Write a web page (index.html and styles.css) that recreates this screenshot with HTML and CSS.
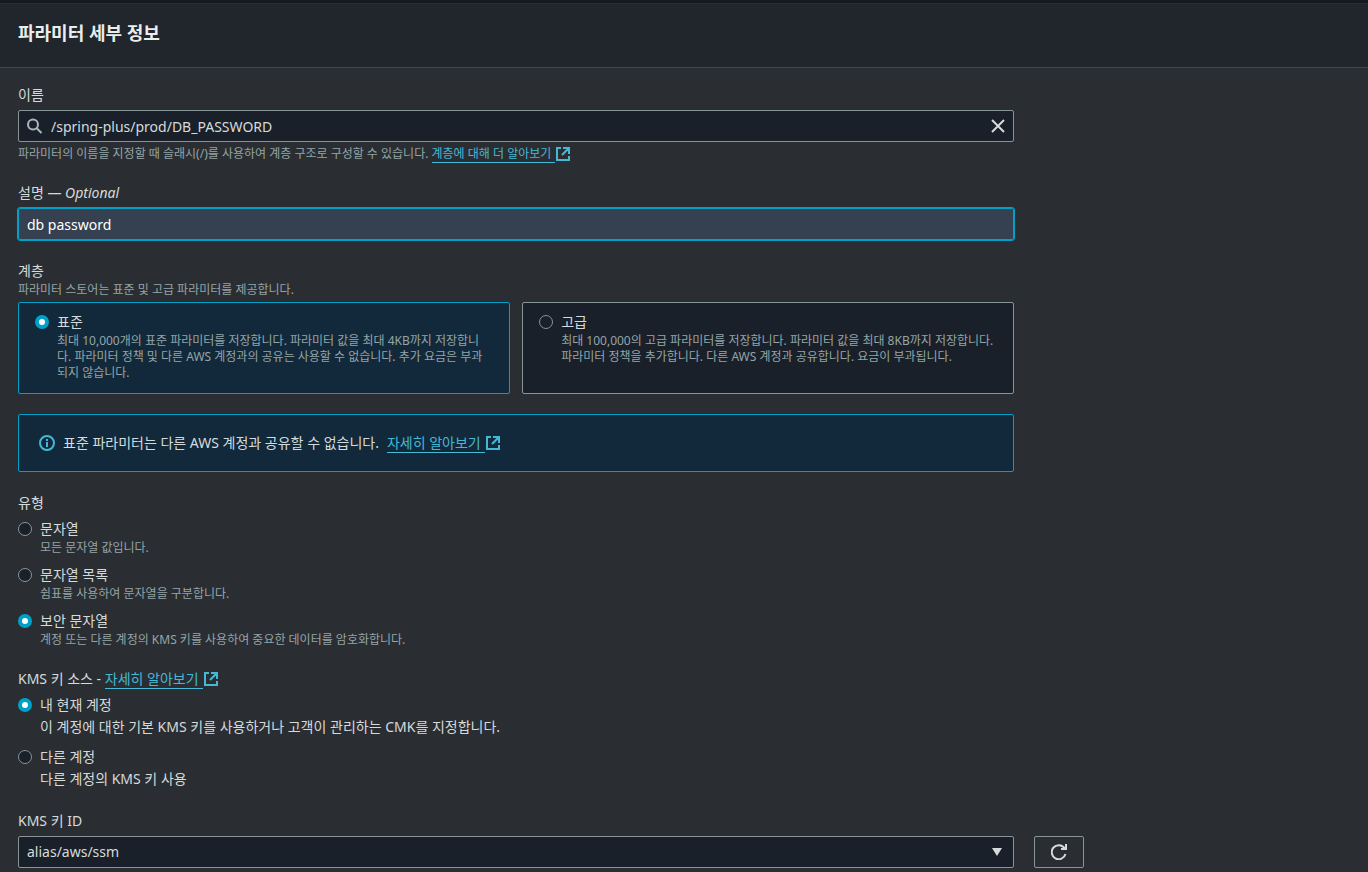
FILE: index.html
```html
<!DOCTYPE html>
<html lang="ko">
<head>
<meta charset="utf-8">
<meta name="viewport" content="width=device-width, initial-scale=1">
<title>파라미터 세부 정보</title>
<link rel="stylesheet" href="styles.css">
</head>
<body>
<svg class="sprite" aria-hidden="true">
  <symbol id="external" viewBox="0 0 14 14">
    <path d="M5 1H1v12h12V9M7 1h6v6M12.500 1.500L6 8" fill="none" stroke="currentColor" stroke-width="2"/>
  </symbol>
</svg>
<main class="panel">
  <header class="panel-header"><h2 class="panel-title">파라미터 세부 정보</h2></header>
  <form class="panel-body">
    <div class="field">
      <label class="label" for="name">이름</label>
      <div class="search">
        <svg class="search-icon" viewBox="0 0 16 16" aria-hidden="true"><circle cx="6" cy="6.500" r="5" fill="none" stroke="currentColor" stroke-width="2"/><path d="M9.500 10l5 5" stroke="currentColor" stroke-width="2"/></svg>
        <input class="search-input" id="name" type="text" value="/spring-plus/prod/DB_PASSWORD">
        <button class="clear" type="button" aria-label="지우기"><svg class="clear-icon" viewBox="0 0 14 14" aria-hidden="true"><path d="M1 1l12 12M13 1L1 13" stroke="currentColor" stroke-width="2"/></svg></button>
      </div>
      <p class="hint">파라미터의 이름을 지정할 때 슬래시(/)를 사용하여 계층 구조로 구성할 수 있습니다. <a class="link" href="#"><span class="link-text">계층에 대해 더 알아보기</span><svg class="external"><use href="#external"/></svg></a></p>
    </div>

    <div class="field">
      <label class="label" for="description">설명 — <em>Optional</em></label>
      <input class="input input-active" id="description" type="text" value="db password">
    </div>

    <fieldset class="field">
      <legend class="label">계층</legend>
      <p class="hint">파라미터 스토어는 표준 및 고급 파라미터를 제공합니다.</p>
      <div class="tiles">
        <label class="tile option">
          <input class="radio" type="radio" name="tier" checked>
          <span class="option-title">표준</span>
          <span class="option-hint">최대 10,000개의 표준 파라미터를 저장합니다. 파라미터 값을 최대 4KB까지 저장합니다. 파라미터 정책 및 다른 AWS 계정과의 공유는 사용할 수 없습니다. 추가 요금은 부과되지 않습니다.</span>
        </label>
        <label class="tile option">
          <input class="radio" type="radio" name="tier">
          <span class="option-title">고급</span>
          <span class="option-hint">최대 100,000의 고급 파라미터를 저장합니다. 파라미터 값을 최대 8KB까지 저장합니다. 파라미터 정책을 추가합니다. 다른 AWS 계정과 공유합니다. 요금이 부과됩니다.</span>
        </label>
      </div>
    </fieldset>

    <div class="alert">
      <svg class="info" viewBox="0 0 16 16" aria-hidden="true"><circle cx="8" cy="8" r="7" fill="none" stroke="currentColor" stroke-width="2"/><path d="M8 4v2M8 7v5" stroke="currentColor" stroke-width="2"/></svg>
      <p class="alert-text">표준 파라미터는 다른 AWS 계정과 공유할 수 없습니다.</p>
      <a class="link" href="#"><span class="link-text">자세히 알아보기</span><svg class="external"><use href="#external"/></svg></a>
    </div>

    <fieldset class="field">
      <legend class="label">유형</legend>
      <div class="options">
        <label class="option"><input class="radio" type="radio" name="type"><span class="option-title">문자열</span><span class="option-hint">모든 문자열 값입니다.</span></label>
        <label class="option"><input class="radio" type="radio" name="type"><span class="option-title">문자열 목록</span><span class="option-hint">쉼표를 사용하여 문자열을 구분합니다.</span></label>
        <label class="option"><input class="radio" type="radio" name="type" checked><span class="option-title">보안 문자열</span><span class="option-hint">계정 또는 다른 계정의 KMS 키를 사용하여 중요한 데이터를 암호화합니다.</span></label>
      </div>
    </fieldset>

    <fieldset class="field">
      <legend class="label">KMS 키 소스 - <a class="link" href="#"><span class="link-text">자세히 알아보기</span><svg class="external"><use href="#external"/></svg></a></legend>
      <div class="options">
        <label class="option"><input class="radio" type="radio" name="source" checked><span class="option-title">내 현재 계정</span><span class="option-text">이 계정에 대한 기본 KMS 키를 사용하거나 고객이 관리하는 CMK를 지정합니다.</span></label>
        <label class="option"><input class="radio" type="radio" name="source"><span class="option-title">다른 계정</span><span class="option-text">다른 계정의 KMS 키 사용</span></label>
      </div>
    </fieldset>

    <div class="field">
      <label class="label" for="key">KMS 키 ID</label>
      <div class="select">
        <select class="input" id="key"><option>alias/aws/ssm</option></select>
        <svg class="arrow" viewBox="0 0 10 8" aria-hidden="true"><path d="M0 0h10L5 8z" fill="currentColor"/></svg>
      </div>
    </div>
    <button class="refresh" type="button" aria-label="새로 고침"><svg class="refresh-icon" viewBox="0 0 16 16" aria-hidden="true"><path d="M14.500 10A7 7 0 1 1 13.500 4.200M15 0v5h-5" fill="none" stroke="currentColor" stroke-width="2"/></svg></button>
  </form>
</main>
</body>
</html>
```
FILE: styles.css
```css
:root {
  --text: #d5dbdb;
  --muted: #95a5a6;
  --border: #879596;
  --accent: #00a1c9;
  --link: #44b9d6;
  --control: #1a2029;
  --selected: #12293b;
}

* { box-sizing: border-box; }

body {
  margin: 0;
  background: #2a2e33;
  color: var(--text);
  font: 14px/22px "Noto Sans", "Noto Sans CJK KR", sans-serif;
}

p, h2, fieldset, legend { margin: 0; padding: 0; border: 0; }
input, select, button { margin: 0; font: inherit; color: inherit; }

.sprite { position: absolute; width: 0; height: 0; }

.panel { border-top: 3px solid #16191f; }

.panel-header {
  padding: 18px;
  background: #21252c;
  border-top: 1px solid #2a2e33;
  border-bottom: 1px solid #414750;
}

.panel-title {
  padding-bottom: 4px;
  color: #eaeded;
  font-size: 18px;
  line-height: 23px;
  font-weight: 700;
}

.panel-body {
  display: grid;
  grid-template-columns: repeat(12, minmax(0, 1fr));
  gap: 20px;
  padding: 16px 15px 4px 18px;
}

.field, .alert { grid-column: 1 / span 9; min-width: 0; }

.label { display: block; margin-bottom: 4px; }
.label:has(+ .hint) { margin-bottom: 0; }

.hint, .option-hint {
  color: var(--muted);
  font-size: 12px;
  line-height: 16px;
}

.search + .hint { margin-top: 4px; }
.hint + .tiles { margin-top: 4px; }

.input, .search {
  display: block;
  width: 100%;
  height: 32px;
  background: var(--control);
  border: 1px solid var(--border);
  border-radius: 2px;
}

.input { padding: 0 8px; appearance: none; }

.input-active {
  background: #354150;
  border-color: var(--accent);
  outline: 1px solid var(--accent);
  color: #fff;
}

.search { display: flex; align-items: center; padding: 0 8px; gap: 8px; }
.search-icon { flex: none; width: 16px; height: 16px; color: #aab7b8; }
.search-input { flex: 1; min-width: 0; height: 30px; padding: 0; border: 0; outline: 0; background: none; }
.clear { display: flex; padding: 0; border: 0; background: none; }
.clear-icon { width: 14px; height: 14px; }

.link { color: var(--link); text-decoration: none; white-space: nowrap; }
.link-text { padding-right: 4px; border-bottom: 1px solid currentColor; }
.external { width: 14px; height: 14px; margin-left: 1px; vertical-align: -2px; }
.hint .external { vertical-align: -3px; }

.tiles { display: grid; grid-template-columns: 1fr 1fr; gap: 12px; }

.options { display: grid; gap: 8px; }

.option {
  display: grid;
  grid-template-columns: 14px 1fr;
  column-gap: 8px;
  align-content: start;
}

.option-hint, .option-text { grid-column: 2; }

.tile {
  padding: 8px 16px 12px;
  background: var(--control);
  border: 1px solid var(--border);
  border-radius: 2px;
}

.tile:has(:checked) { background: var(--selected); border-color: var(--accent); }

.radio {
  appearance: none;
  align-self: center;
  width: 14px;
  height: 14px;
  border: 1px solid var(--border);
  border-radius: 50%;
  background: var(--control);
}

.radio:checked { border: 4px solid var(--accent); background: #fff; }

.alert {
  display: flex;
  align-items: center;
  padding: 17px 20px;
  gap: 8px;
  background: var(--selected);
  border: 1px solid var(--accent);
  border-radius: 2px;
}

.info { flex: none; width: 16px; height: 16px; color: var(--link); }

.select { position: relative; }
.arrow { position: absolute; right: 12px; top: 12px; width: 10px; height: 8px; pointer-events: none; }

.refresh {
  display: flex;
  align-items: center;
  justify-content: center;
  align-self: end;
  width: 50px;
  height: 32px;
  padding: 0;
  border: 1px solid var(--border);
  border-radius: 2px;
  background: none;
}

.refresh-icon { width: 16px; height: 16px; }
```
